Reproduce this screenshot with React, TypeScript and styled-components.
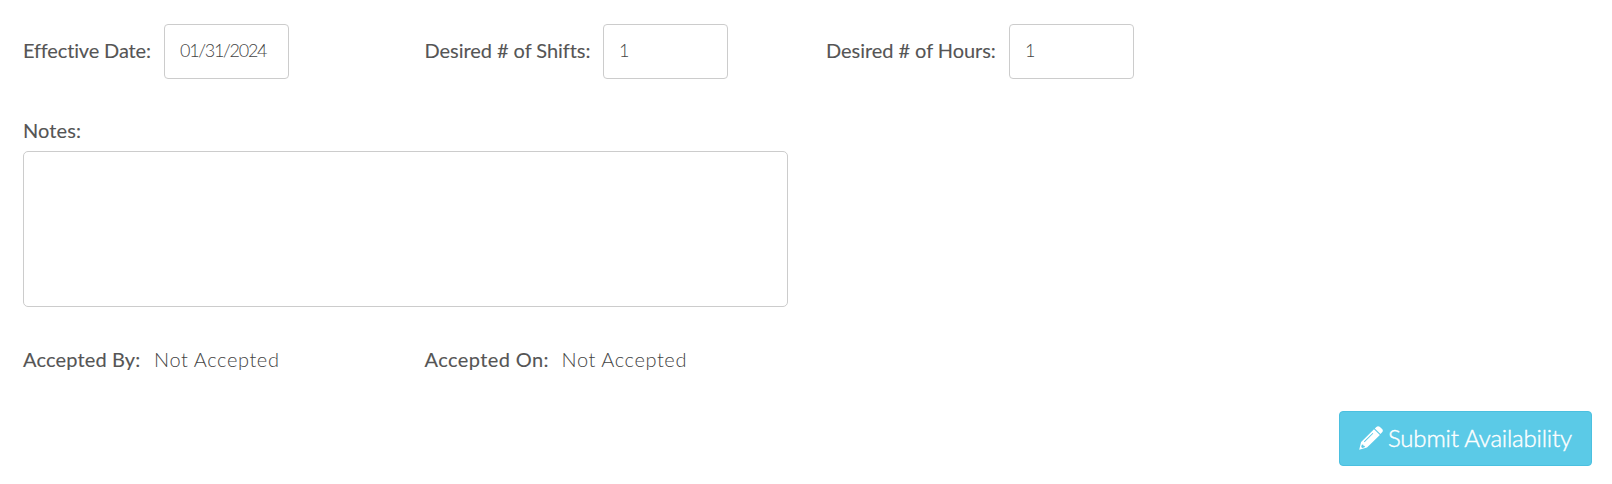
import React from 'react';
import styled, { createGlobalStyle } from 'styled-components';

const GlobalStyle = createGlobalStyle`
  *, *::before, *::after { box-sizing: border-box; }
  body {
    margin: 0;
    background: #fff;
    color: #555;
    font-family: Lato, "Liberation Sans", sans-serif;
    font-size: 20px;
    line-height: 28px;
  }
`;

const Form = styled.form`
  display: flex;
  flex-direction: column;
  height: 484px;
  padding: 24px 20px 18px 23px;
`;

const Row = styled.div`
  display: grid;
  grid-template-columns: 401.5px 401.5px 1fr;
  align-items: center;
`;

const Field = styled.div<{ $lift?: number }>`
  display: flex;
  align-items: center;

  & > label,
  & > span {
    padding-bottom: ${({ $lift = 0 }) => $lift}px;
  }
`;

const Label = styled.label<{ $width?: number; $tracking?: number }>`
  width: ${({ $width }) => ($width ? `${$width}px` : 'auto')};
  letter-spacing: ${({ $tracking = 0 }) => $tracking}px;
  font-weight: 400;
  font-variant-ligatures: none;
  -webkit-text-stroke: 0.1px #555;
  white-space: nowrap;
`;

const Input = styled.input<{ $tracking?: number }>`
  width: 125px;
  height: 55px;
  padding: 0 15px 3px;
  border: 1px solid #ccc;
  border-radius: 4px;
  background: #fff;
  color: #444;
  font: 300 18px Lato, "Liberation Sans", sans-serif;
  letter-spacing: ${({ $tracking = 0 }) => $tracking}px;
  outline: none;
`;

const NotesField = styled.div`
  display: flex;
  flex-direction: column;
  margin: 37px 0 38px;
`;

const Notes = styled.textarea`
  width: 765px;
  height: 156px;
  margin-top: 7px;
  border: 1px solid #ccc;
  border-radius: 5px;
  resize: none;
  outline: none;
`;

const Value = styled.span`
  color: #444;
  font-weight: 300;
  letter-spacing: 0.6px;
  white-space: nowrap;
`;

const SubmitButton = styled.button`
  display: flex;
  align-items: center;
  align-self: flex-end;
  width: 253px;
  height: 55px;
  margin-top: auto;
  padding: 0 0 2px 19px;
  border: 1px solid #4bc0e0;
  border-radius: 4px;
  background: #5bcae7;
  color: #fff;
  font: 300 24px Lato, "Liberation Sans", sans-serif;
  letter-spacing: -0.2px;
  white-space: nowrap;
`;

const ButtonText = styled.span`
  margin-left: 5px;
  -webkit-text-stroke: 0.4px #fff;
`;

const PencilIcon = () => (
  <svg width="24" height="24" viewBox="0 0 24 24" fill="currentColor" aria-hidden="true">
    <path d="M15.8 2.5 17.4.9c1-1 2.300-1 3.300-.1l2.400 2.300c1 1 1 2.200 0 3.200L21.500 8z" />
    <path
      fillRule="evenodd"
      d="M15 3.200 20.900 9 8 21.600.2 23.700 2.100 16.100zM13.600 6.900 4.900 15.600l.7.700 8.700-8.700zM2.800 18.800 2.200 20.900l1.100 1.100 2.300-.7.4-1.200-1.500-.4-.4-1.300z"
    />
  </svg>
);

export default function App() {
  return (
    <>
      <GlobalStyle />
      <Form onSubmit={(e) => e.preventDefault()}>
        <Row>
          <Field $lift={3}>
            <Label htmlFor="date" $width={141} $tracking={-0.15}>Effective Date:</Label>
            <Input id="date" $tracking={-1.3} defaultValue="01/31/2024" />
          </Field>
          <Field $lift={3}>
            <Label htmlFor="shifts" $width={178.5} $tracking={-0.05}>Desired # of Shifts:</Label>
            <Input id="shifts" defaultValue="1" />
          </Field>
          <Field $lift={3}>
            <Label htmlFor="hours" $width={183} $tracking={-0.05}>Desired # of Hours:</Label>
            <Input id="hours" defaultValue="1" />
          </Field>
        </Row>
        <NotesField>
          <Label htmlFor="notes" $tracking={0.1}>Notes:</Label>
          <Notes id="notes" />
        </NotesField>
        <Row>
          <Field>
            <Label as="span" $width={131} $tracking={0.15}>Accepted By:</Label>
            <Value>Not Accepted</Value>
          </Field>
          <Field>
            <Label as="span" $width={137} $tracking={0.4}>Accepted On:</Label>
            <Value>Not Accepted</Value>
          </Field>
        </Row>
        <SubmitButton type="submit">
          <PencilIcon />
          <ButtonText>Submit Availability</ButtonText>
        </SubmitButton>
      </Form>
    </>
  );
}
